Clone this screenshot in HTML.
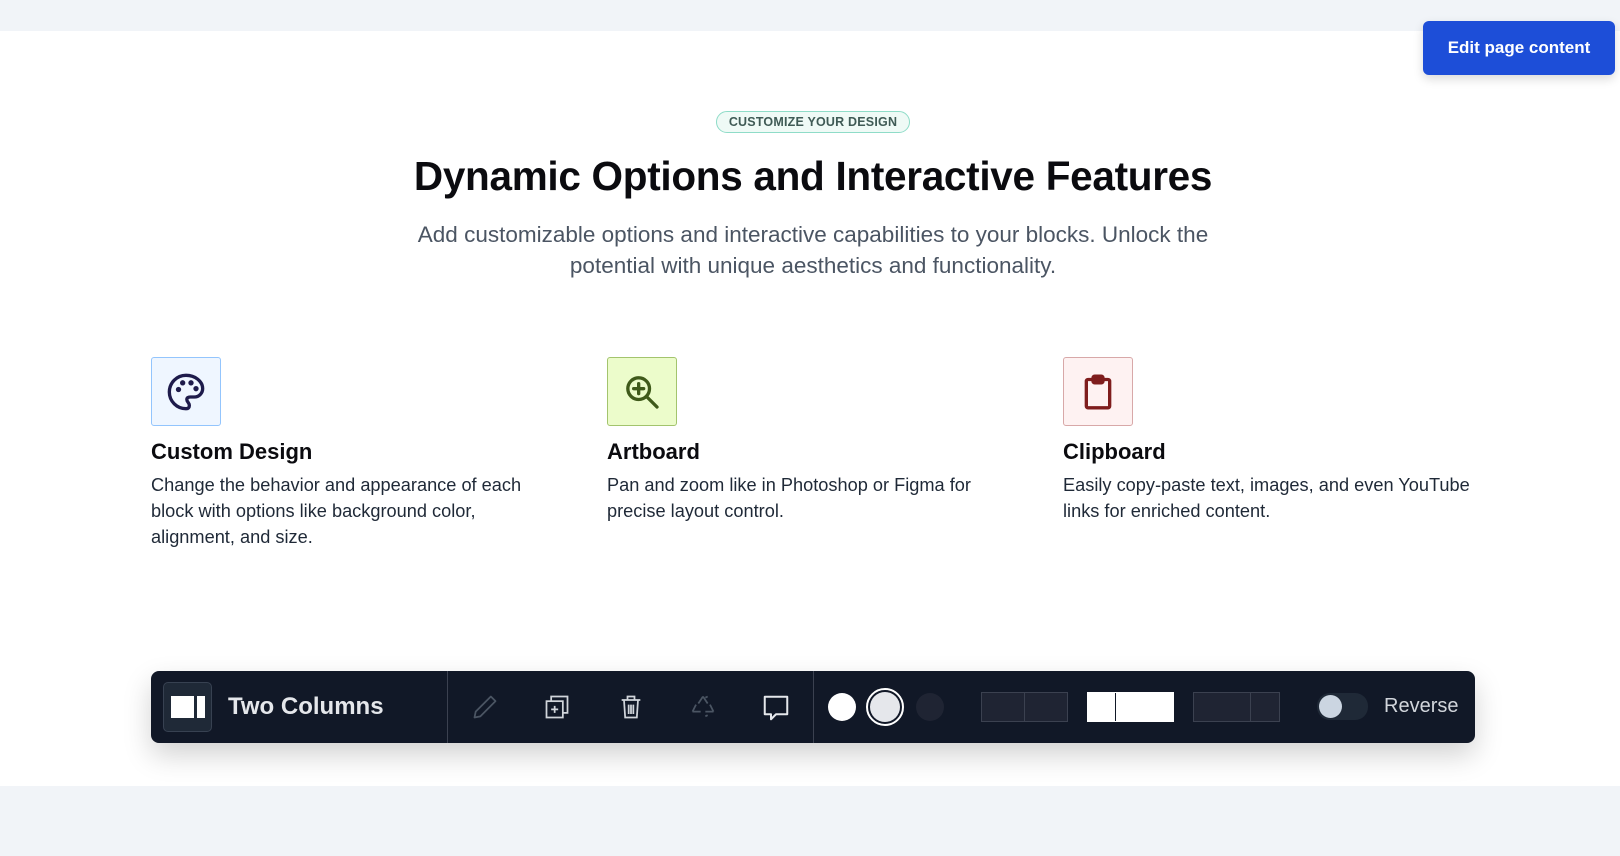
<!DOCTYPE html>
<html><head><meta charset="utf-8"><style>
*{margin:0;padding:0;box-sizing:border-box}
body{width:1620px;height:856px;background:#f1f4f8;font-family:"Liberation Sans",sans-serif;position:relative;overflow:hidden}
.main{position:absolute;left:0;top:31px;width:1620px;height:755px;background:#fff}
.btn{position:absolute;left:1423px;top:21px;width:192px;height:54px;background:#1d4ed8;border-radius:6px;color:#fff;font-weight:bold;font-size:17px;display:flex;align-items:center;justify-content:center;box-shadow:0 4px 10px rgba(0,0,0,.15)}
.badge{position:absolute;left:716px;top:111px;width:194px;height:22px;border:1.5px solid #8fdcc8;background:#effaf6;border-radius:11px;font-size:12.5px;font-weight:bold;color:#3f5a55;display:flex;align-items:center;justify-content:center;letter-spacing:.2px}
h1{position:absolute;left:0;width:1626px;top:153px;text-align:center;font-size:40.5px;font-weight:bold;color:#0b0b0f;letter-spacing:-.3px}
.sub{position:absolute;left:0;width:1626px;top:219px;text-align:center;font-size:22.5px;line-height:31px;color:#4b5563}
.ib{position:absolute;top:357px;width:70px;height:69px;border-radius:3px;display:flex;align-items:center;justify-content:center}
.t{position:absolute;top:439px;font-size:22px;font-weight:bold;color:#0b0b0f}
.d{position:absolute;top:472px;font-size:18.2px;line-height:26px;color:#1f2937;width:400px}
.bar{position:absolute;left:151px;top:671px;width:1324px;height:72px;background:#111827;border-radius:8px;box-shadow:0 12px 28px rgba(0,0,0,.18)}
.bar>*{position:absolute}
.lay{top:21px;width:87px;height:30px;border:1px solid #3b4150;background:#1f2433}
</style></head><body>
<div class="main"></div>
<div class="btn">Edit page content</div>
<div class="badge">CUSTOMIZE YOUR DESIGN</div>
<h1>Dynamic Options and Interactive Features</h1>
<div class="sub">Add customizable options and interactive capabilities to your blocks. Unlock the<br>potential with unique aesthetics and functionality.</div>

<div class="ib" style="left:151px;background:#eff6ff;border:1px solid #93c5fd">
<svg width="40" height="40" viewBox="0 0 24 24" fill="none" stroke="#1e1b4b" stroke-width="2" stroke-linecap="round" stroke-linejoin="round"><path d="M12 2a10 10 0 0 0 0 20c1.7 0 2-1 2-2 0-1.5-1.5-2-1.5-3.5 0-1 .8-1.5 2-1.5H17a5 5 0 0 0 5-5C22 5.6 17.5 2 12 2z"/><circle cx="7.5" cy="10.5" r=".6" fill="#1e1b4b"/><circle cx="10" cy="6.5" r=".6" fill="#1e1b4b"/><circle cx="15" cy="6.5" r=".6" fill="#1e1b4b"/><circle cx="18" cy="10" r=".6" fill="#1e1b4b"/></svg></div>
<div class="ib" style="left:607px;background:#ecfccb;border:1px solid #a3c46d">
<svg width="40" height="40" viewBox="0 0 24 24" fill="none" stroke="#3f5a1a" stroke-width="2" stroke-linecap="round"><circle cx="10" cy="10" r="6.5"/><path d="M15 15l6 6M10 7v6M7 10h6"/></svg></div>
<div class="ib" style="left:1063px;background:#fef2f2;border:1px solid #d8a8a8">
<svg width="40" height="40" viewBox="0 0 24 24" fill="none" stroke="#7f1d1d" stroke-width="2" stroke-linejoin="round"><rect x="5" y="4.5" width="14" height="17" rx="1"/><rect x="9" y="2.5" width="6" height="4" rx="1" fill="#7f1d1d"/></svg></div>

<div class="t" style="left:151px">Custom Design</div>
<div class="t" style="left:607px">Artboard</div>
<div class="t" style="left:1063px">Clipboard</div>
<div class="d" style="left:151px;width:385px">Change the behavior and appearance of each block with options like background color, alignment, and size.</div>
<div class="d" style="left:607px;width:385px">Pan and zoom like in Photoshop or Figma for precise layout control.</div>
<div class="d" style="left:1063px;width:420px">Easily copy-paste text, images, and even YouTube links for enriched content.</div>

<div class="bar">
<div style="left:12px;top:11px;width:49px;height:50px;border:1px solid #374151;border-radius:5px;background:#1f2937"></div>
<div style="left:20px;top:25px;width:23px;height:22px;background:#fff"></div>
<div style="left:46px;top:25px;width:8px;height:22px;background:#fff"></div>
<div style="left:77px;top:22px;font-size:24px;font-weight:bold;color:#e5e7eb">Two Columns</div>
<div style="left:296px;top:0;width:1px;height:72px;background:#3b4150"></div>
<div style="left:662px;top:0;width:1px;height:72px;background:#3b4150"></div>
<svg style="left:320px;top:22px" width="28" height="28" viewBox="0 0 24 24" fill="none" stroke="#4b5563" stroke-width="1.5" stroke-linejoin="round"><path d="M17 3l4 4L8 20l-5 1 1-5z"/></svg>
<svg style="left:392px;top:22px" width="28" height="28" viewBox="0 0 24 24" fill="none" stroke="#d1d5db" stroke-width="1.5"><rect x="3" y="7" width="14" height="14"/><path d="M7 7V3h14v14h-4M10 11v6M7 14h6"/></svg>
<svg style="left:466px;top:22px" width="28" height="28" viewBox="0 0 24 24" fill="none" stroke="#d1d5db" stroke-width="1.5"><path d="M4 6h16M9 6V3h6v3M6 6l1 15h10l1-15M10 10v8M12 10v8M14 10v8"/></svg>
<svg style="left:538px;top:22px" width="28" height="28" viewBox="0 0 24 24" fill="none" stroke="#4b5563" stroke-width="1.5"><path d="M12 3l4 6M12 3l-4 6M14 4l2-1M3 16l3-6M3 16h7M21 16l-3-6M21 16h-7M16 19l-2 1"/></svg>
<svg style="left:610px;top:22px" width="30" height="30" viewBox="0 0 24 24" fill="none" stroke="#e5e7eb" stroke-width="1.6" stroke-linejoin="round"><path d="M3 3h18v14h-9l-4 4v-4H3z"/></svg>
<div style="left:677px;top:22px;width:28px;height:28px;border-radius:50%;background:#fff"></div>
<div style="left:715px;top:17px;width:38px;height:38px;border-radius:50%;border:2.5px solid #fff;background:#111827"></div>
<div style="left:719px;top:21px;width:30px;height:30px;border-radius:50%;background:#e5e7eb"></div>
<div style="left:765px;top:22px;width:28px;height:28px;border-radius:50%;background:#1f2433"></div>
<div class="lay" style="left:830px"><div style="position:absolute;left:42px;top:0;width:1px;height:28px;background:#3b4150"></div></div>
<div class="lay" style="left:936px;background:#fff;border-color:#fff"><div style="position:absolute;left:27px;top:0;width:1px;height:28px;background:#111827"></div></div>
<div class="lay" style="left:1042px"><div style="position:absolute;left:56px;top:0;width:1px;height:28px;background:#3b4150"></div></div>
<div style="left:1166px;top:22px;width:51px;height:27px;border-radius:13px;background:#1f2937"></div>
<div style="left:1168px;top:24px;width:23px;height:23px;border-radius:50%;background:#cbd5e1"></div>
<div style="left:1233px;top:24px;font-size:20px;color:#d1d5db">Reverse</div>
</div>
</body></html>
